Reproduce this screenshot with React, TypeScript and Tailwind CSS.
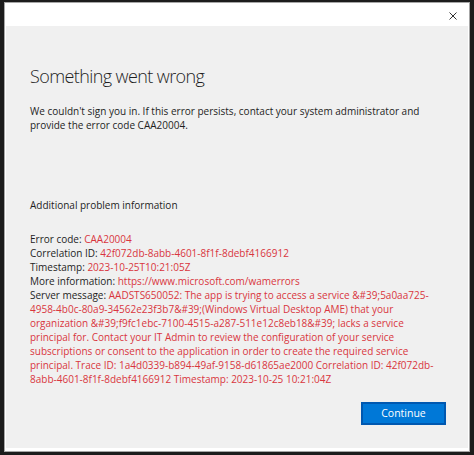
const red = "text-[#d9363e]";

function Field({ label, value }: { label: string; value: string }) {
  return (
    <div className="whitespace-nowrap">
      {label} <span className={red}>{value}</span>
    </div>
  );
}

export default function App() {
  return (
    <div className="h-[455px] w-[474px] bg-[#1c1c1c] overflow-hidden pt-[2px] pl-[4px] font-['Open_Sans',sans-serif]">
      <div className="w-[466px] h-[450px] border border-[#a6a6a6] bg-white flex flex-col">
        {/* Title bar */}
        <div className="h-[23px] flex items-center justify-end pr-[12px] pt-[3px]">
          <svg className="w-[8px] h-[8px]" viewBox="0 0 8 8" fill="none">
            <path d="M0.5 0.5l7 7M7.5 0.5l-7 7" stroke="#333" strokeWidth="1" />
          </svg>
        </div>

        {/* Content */}
        <div className="flex-1 mx-[1px] mb-[3px] bg-[#f0f0f0] pl-[24px] pr-[22px] pt-[37px] text-[#1e1e1e]">
          <h1 className="text-[18px] font-light leading-[26px] tracking-[-0.6px]">
            Something went wrong
          </h1>

          <p className="mt-[15px] text-[10px] leading-[14px]">
            We couldn't sign you in. If this error persists, contact your system administrator and
            <br />
            provide the error code CAA20004.
          </p>

          <div className="mt-[66px] text-[10px] leading-[14px]">Additional problem information</div>

          <div className="mt-[20px] text-[10px] leading-[14px]">
            <Field label="Error code:" value="CAA20004" />
            <Field label="Correlation ID:" value="42f072db-8abb-4601-8f1f-8debf4166912" />
            <Field label="Timestamp:" value="2023-10-25T10:21:05Z" />
            <Field label="More information:" value="https://www.microsoft.com/wamerrors" />
            <div className="whitespace-nowrap">
              Server message:{" "}
              <span className={red}>
                {"AADSTS650052: The app is trying to access a service &#39;5a0aa725-"}
              </span>
            </div>
            <div className={`whitespace-nowrap ${red}`}>
              <div>{"4958-4b0c-80a9-34562e23f3b7&#39;(Windows Virtual Desktop AME) that your"}</div>
              <div>{"organization &#39;f9fc1ebc-7100-4515-a287-511e12c8eb18&#39; lacks a service"}</div>
              <div>principal for. Contact your IT Admin to review the configuration of your service</div>
              <div>subscriptions or consent to the application in order to create the required service</div>
              <div>principal. Trace ID: 1a4d0339-b894-49af-9158-d61865ae2000 Correlation ID: 42f072db-</div>
              <div>8abb-4601-8f1f-8debf4166912 Timestamp: 2023-10-25 10:21:04Z</div>
            </div>
          </div>

          <div className="mt-[16px] flex justify-end">
            <button className="w-[85px] h-[23px] bg-[#0078d7] border-2 border-[#0058b0] text-white text-[10.5px] leading-none">
              Continue
            </button>
          </div>
        </div>
      </div>
    </div>
  );
}
